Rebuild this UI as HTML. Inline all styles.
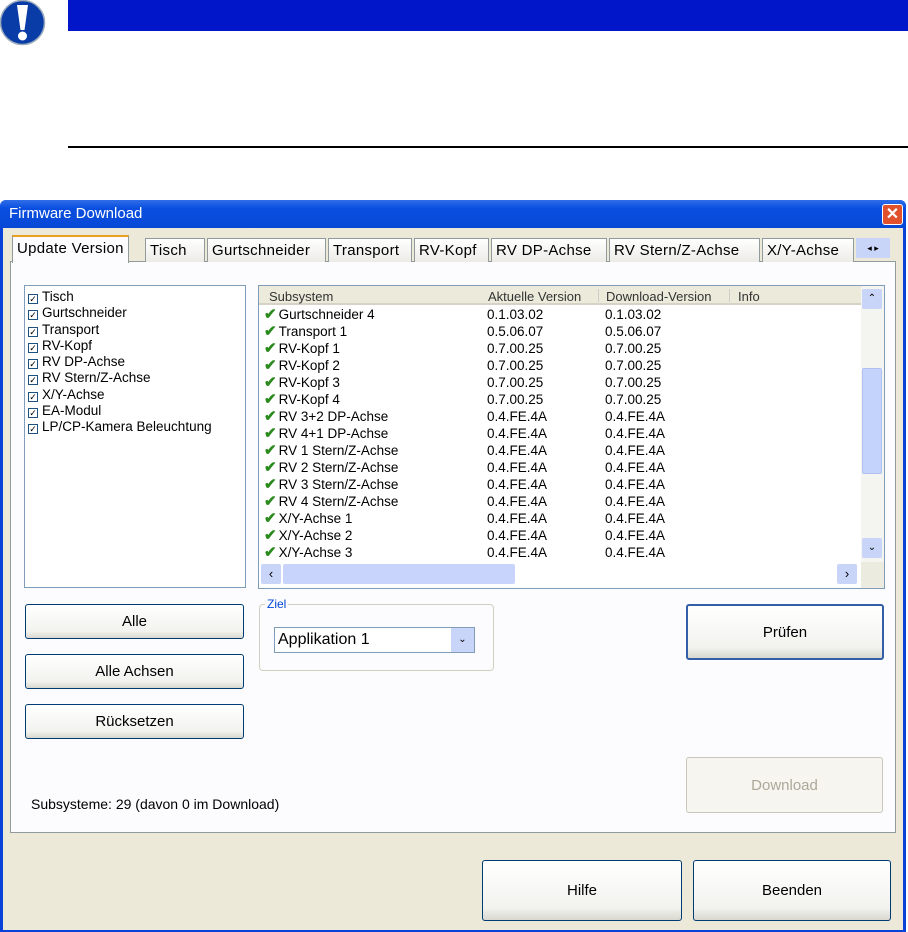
<!DOCTYPE html>
<html><head><meta charset="utf-8"><style>
*{box-sizing:border-box;margin:0;padding:0}
body{width:908px;height:932px;background:#fff;position:relative;overflow:hidden;font-family:"Liberation Sans",sans-serif;font-size:13px;color:#000}
.a{position:absolute}
.btn{position:absolute;background:linear-gradient(#fff,#f2f2ee 80%,#d8d8d0);border:1px solid #003c74;border-radius:3px;text-align:center;font-size:15px;display:flex;align-items:center;justify-content:center}
.tab{position:absolute;top:238px;height:24px;background:linear-gradient(#fff,#ecebe6);border:1px solid #919b9c;border-bottom:none;font-size:15px;padding:3px 4px 0;letter-spacing:0.3px}
.row{position:absolute;left:0;height:17px;font-size:13.5px;line-height:17px;white-space:nowrap}
.ck{color:#2a8a1e;font-weight:bold;font-size:15px;margin-right:2px}
.cb{display:inline-block;width:10px;height:10px;border:1px solid #1c5180;margin-right:4px;font-size:9px;line-height:8px;text-align:center;vertical-align:-1px}
</style></head><body>
<svg class="a" style="left:0;top:0" width="46" height="46"><circle cx="22.5" cy="22.5" r="22" fill="#0a3ca8" stroke="#9ab" stroke-width="1.5"/><path d="M17 5h11l-3.5 25h-4z" fill="#fff"/><circle cx="22.5" cy="36" r="4.5" fill="#fff"/></svg>
<div class="a" style="left:68px;top:0;width:840px;height:31px;background:#0016c8"></div>
<div class="a" style="left:68px;top:146px;width:840px;height:2px;background:#000"></div>

<div class="a" style="left:0;top:200px;width:906px;height:732px;background:#0842d8;border-radius:6px 6px 0 0"></div>
<div class="a" style="left:0;top:200px;width:906px;height:28px;background:linear-gradient(#2f6ee8,#0a4ee0 30%,#0648d6);border-radius:6px 6px 0 0"></div>
<div class="a" style="left:9px;top:205px;color:#fff;font-size:15px">Firmware Download</div>
<div class="a" style="left:882px;top:204px;width:21px;height:21px;background:#e0512c;border:1px solid #fff;border-radius:3px;color:#fff;font-size:16px;font-weight:bold;text-align:center;line-height:19px">✕</div>
<div class="a" style="left:3px;top:228px;width:900px;height:702px;background:#ece9d8"></div>
<div class="a" style="left:10px;top:261px;width:886px;height:572px;background:#fcfcfe;border:1px solid #919b9c"></div>

<div class="tab" style="left:12px;top:235px;height:28px;background:#fcfcfe;border-top:2px solid #e8a020;padding-top:3px">Update Version</div>
<div class="tab" style="left:145px;width:60px">Tisch</div>
<div class="tab" style="left:207px;width:119px">Gurtschneider</div>
<div class="tab" style="left:328px;width:84px">Transport</div>
<div class="tab" style="left:414px;width:75px">RV-Kopf</div>
<div class="tab" style="left:491px;width:116px">RV DP-Achse</div>
<div class="tab" style="left:609px;width:151px">RV Stern/Z-Achse</div>
<div class="tab" style="left:762px;width:92px">X/Y-Achse</div>
<div class="a" style="left:856px;top:238px;width:34px;height:20px;background:#c8d4f8;font-size:9px;text-align:center;line-height:20px">◂ ▸</div>

<div class="a" style="left:24px;top:285px;width:222px;height:303px;background:#fff;border:1px solid #7f9db9;padding:3px 0 0 3px">
<div style="line-height:16.3px;font-size:13.5px">
<div><span class="cb">✓</span>Tisch</div><div><span class="cb">✓</span>Gurtschneider</div><div><span class="cb">✓</span>Transport</div><div><span class="cb">✓</span>RV-Kopf</div><div><span class="cb">✓</span>RV DP-Achse</div><div><span class="cb">✓</span>RV Stern/Z-Achse</div><div><span class="cb">✓</span>X/Y-Achse</div><div><span class="cb">✓</span>EA-Modul</div><div><span class="cb">✓</span>LP/CP-Kamera Beleuchtung</div>
</div></div>

<div class="a" style="left:258px;top:285px;width:627px;height:304px;background:#fff;border:1px solid #7f9db9;overflow:hidden">
<div class="a" style="left:0;top:0;width:603px;height:19px;background:#ebeadb;border-bottom:2px solid #d6d3c6;color:#333"></div>
<div class="a" style="left:10px;top:3px;color:#333">Subsystem</div>
<div class="a" style="left:229px;top:3px;color:#333">Aktuelle Version</div>
<div class="a" style="left:339px;top:3px;width:1px;height:13px;background:#ccc"></div>
<div class="a" style="left:347px;top:3px;color:#333">Download-Version</div>
<div class="a" style="left:470px;top:3px;width:1px;height:13px;background:#ccc"></div>
<div class="a" style="left:479px;top:3px;color:#333">Info</div>
<div class="a" style="left:5px;top:20px;width:600px">
<div class="row" style="top:0"><span class="ck">✔</span>Gurtschneider 4<span class="a" style="left:223px">0.1.03.02</span><span class="a" style="left:341px">0.1.03.02</span></div>
<div class="row" style="top:17px"><span class="ck">✔</span>Transport 1<span class="a" style="left:223px">0.5.06.07</span><span class="a" style="left:341px">0.5.06.07</span></div>
<div class="row" style="top:34px"><span class="ck">✔</span>RV-Kopf 1<span class="a" style="left:223px">0.7.00.25</span><span class="a" style="left:341px">0.7.00.25</span></div>
<div class="row" style="top:51px"><span class="ck">✔</span>RV-Kopf 2<span class="a" style="left:223px">0.7.00.25</span><span class="a" style="left:341px">0.7.00.25</span></div>
<div class="row" style="top:68px"><span class="ck">✔</span>RV-Kopf 3<span class="a" style="left:223px">0.7.00.25</span><span class="a" style="left:341px">0.7.00.25</span></div>
<div class="row" style="top:85px"><span class="ck">✔</span>RV-Kopf 4<span class="a" style="left:223px">0.7.00.25</span><span class="a" style="left:341px">0.7.00.25</span></div>
<div class="row" style="top:102px"><span class="ck">✔</span>RV 3+2 DP-Achse<span class="a" style="left:223px">0.4.FE.4A</span><span class="a" style="left:341px">0.4.FE.4A</span></div>
<div class="row" style="top:119px"><span class="ck">✔</span>RV 4+1 DP-Achse<span class="a" style="left:223px">0.4.FE.4A</span><span class="a" style="left:341px">0.4.FE.4A</span></div>
<div class="row" style="top:136px"><span class="ck">✔</span>RV 1 Stern/Z-Achse<span class="a" style="left:223px">0.4.FE.4A</span><span class="a" style="left:341px">0.4.FE.4A</span></div>
<div class="row" style="top:153px"><span class="ck">✔</span>RV 2 Stern/Z-Achse<span class="a" style="left:223px">0.4.FE.4A</span><span class="a" style="left:341px">0.4.FE.4A</span></div>
<div class="row" style="top:170px"><span class="ck">✔</span>RV 3 Stern/Z-Achse<span class="a" style="left:223px">0.4.FE.4A</span><span class="a" style="left:341px">0.4.FE.4A</span></div>
<div class="row" style="top:187px"><span class="ck">✔</span>RV 4 Stern/Z-Achse<span class="a" style="left:223px">0.4.FE.4A</span><span class="a" style="left:341px">0.4.FE.4A</span></div>
<div class="row" style="top:204px"><span class="ck">✔</span>X/Y-Achse 1<span class="a" style="left:223px">0.4.FE.4A</span><span class="a" style="left:341px">0.4.FE.4A</span></div>
<div class="row" style="top:221px"><span class="ck">✔</span>X/Y-Achse 2<span class="a" style="left:223px">0.4.FE.4A</span><span class="a" style="left:341px">0.4.FE.4A</span></div>
<div class="row" style="top:238px"><span class="ck">✔</span>X/Y-Achse 3<span class="a" style="left:223px">0.4.FE.4A</span><span class="a" style="left:341px">0.4.FE.4A</span></div>
</div>
<div class="a" style="left:602px;top:0;width:24px;height:276px;background:#f4f4f0"></div>
<div class="a" style="left:603px;top:3px;width:20px;height:20px;background:#c8d4f8;border-radius:2px;font-size:10px;text-align:center;line-height:20px">⌃</div>
<div class="a" style="left:603px;top:82px;width:20px;height:106px;background:#c4d3fb;border:1px solid #b0c0f0;border-radius:2px"></div>
<div class="a" style="left:603px;top:252px;width:20px;height:20px;background:#c8d4f8;border-radius:2px;font-size:10px;text-align:center;line-height:20px">⌄</div>
<div class="a" style="left:0;top:276px;width:602px;height:27px;background:#fff"></div>
<div class="a" style="left:2px;top:278px;width:20px;height:20px;background:#c8d4f8;border-radius:2px;text-align:center;line-height:20px">‹</div>
<div class="a" style="left:24px;top:278px;width:232px;height:20px;background:#c8d4fb;border-radius:2px"></div>
<div class="a" style="left:578px;top:278px;width:20px;height:20px;background:#c8d4f8;border-radius:2px;text-align:center;line-height:20px">›</div>
<div class="a" style="left:602px;top:276px;width:24px;height:27px;background:#ecebe0"></div>
</div>

<div class="btn" style="left:25px;top:604px;width:219px;height:35px">Alle</div>
<div class="btn" style="left:25px;top:654px;width:219px;height:35px">Alle Achsen</div>
<div class="btn" style="left:25px;top:704px;width:219px;height:35px">Rücksetzen</div>

<div class="a" style="left:259px;top:604px;width:235px;height:67px;border:1px solid #d0d0bf;border-radius:4px"></div>
<div class="a" style="left:265px;top:597px;background:#fcfcfe;color:#0046d5;font-size:12px;padding:0 2px">Ziel</div>
<div class="a" style="left:274px;top:627px;width:201px;height:26px;background:#fff;border:1px solid #7f9db9;font-size:16px;padding:3px 0 0 3px">Applikation 1</div>
<div class="a" style="left:451px;top:628px;width:23px;height:24px;background:#c8d4f8;font-size:10px;text-align:center;line-height:24px">⌄</div>

<div class="btn" style="left:686px;top:604px;width:198px;height:56px;border-width:2px;border-color:#335ea8">Prüfen</div>
<div class="btn" style="left:686px;top:757px;width:197px;height:56px;border-color:#c9c7ba;color:#aca899;background:#f6f5f0">Download</div>
<div class="a" style="left:31px;top:796px;font-size:14px">Subsysteme: 29 (davon 0 im Download)</div>

<div class="btn" style="left:482px;top:860px;width:200px;height:61px">Hilfe</div>
<div class="btn" style="left:693px;top:860px;width:198px;height:61px">Beenden</div>
</body></html>
